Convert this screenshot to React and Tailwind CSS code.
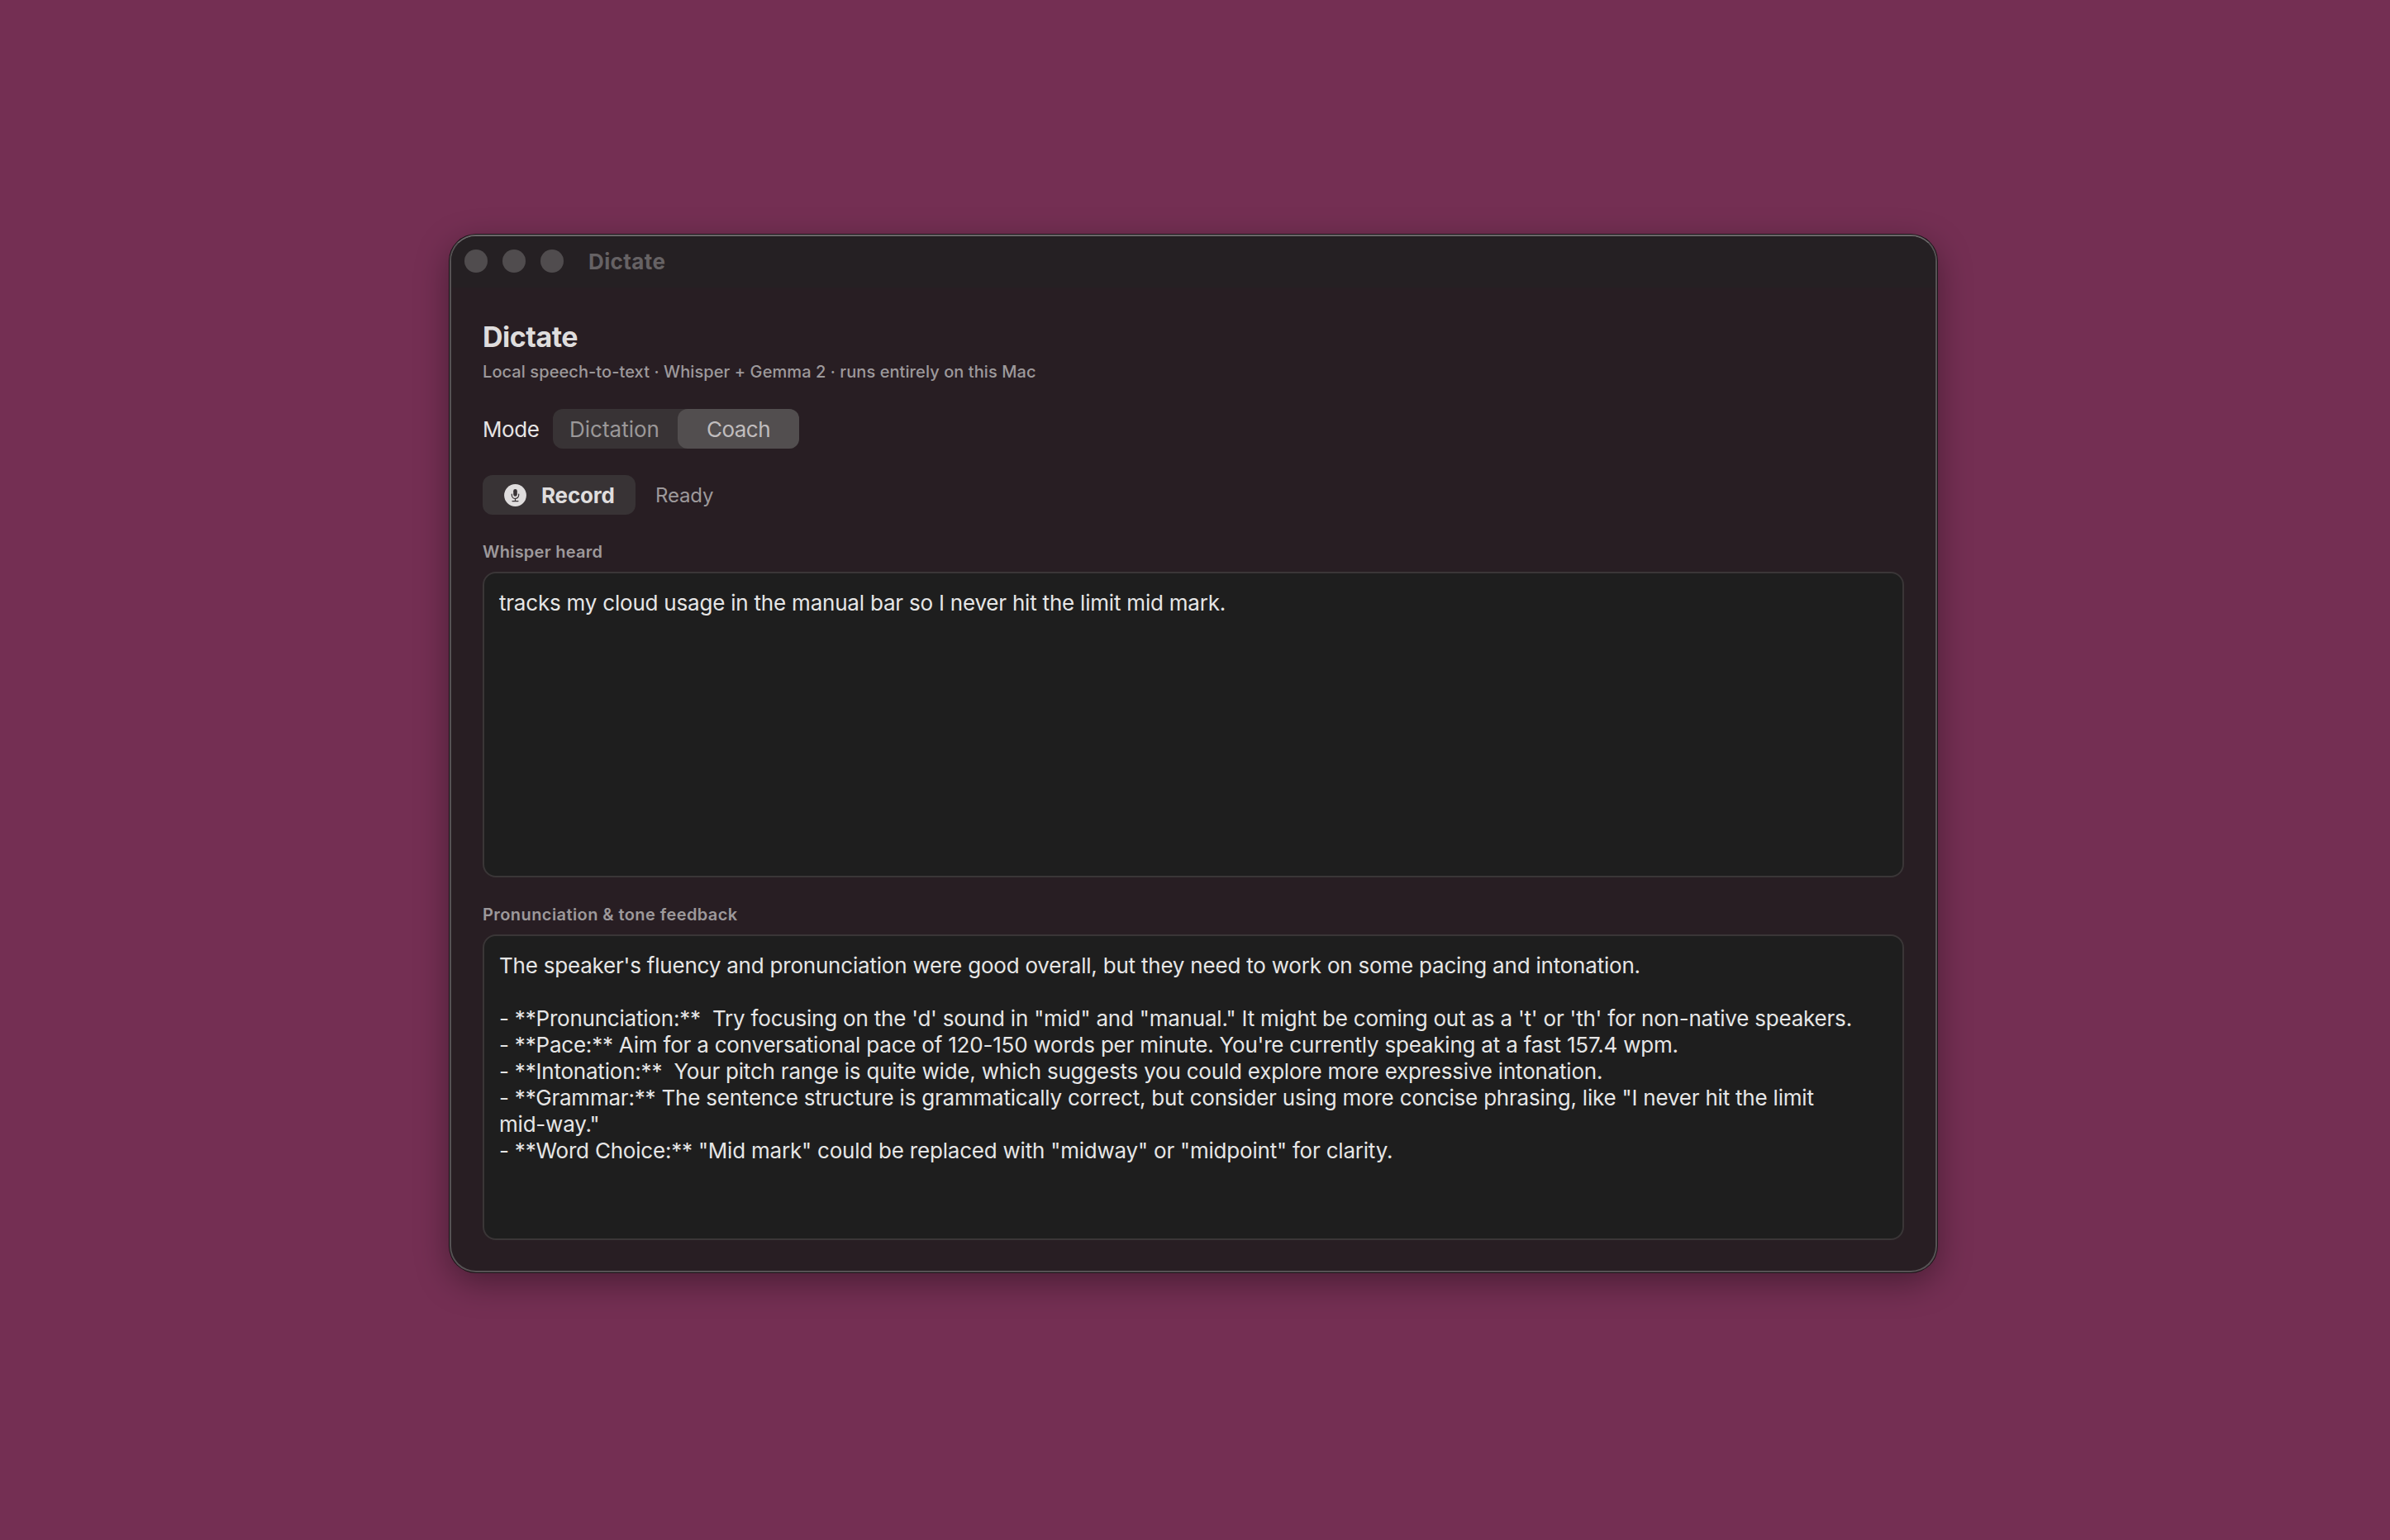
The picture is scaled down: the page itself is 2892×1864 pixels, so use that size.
import React, { useState } from 'react';
import clsx from 'clsx';

const MODES = [
  { id: 'dictation', label: 'Dictation' },
  { id: 'coach', label: 'Coach' },
];

const transcript = 'tracks my cloud usage in the manual bar so I never hit the limit mid mark.';

const feedback = `The speaker's fluency and pronunciation were good overall, but they need to work on some pacing and intonation.

- **Pronunciation:**  Try focusing on the 'd' sound in "mid" and "manual." It might be coming out as a 't' or 'th' for non-native speakers.
- **Pace:** Aim for a conversational pace of 120-150 words per minute. You're currently speaking at a fast 157.4 wpm.
- **Intonation:**  Your pitch range is quite wide, which suggests you could explore more expressive intonation.
- **Grammar:** The sentence structure is grammatically correct, but consider using more concise phrasing, like "I never hit the limit mid-way."
- **Word Choice:** "Mid mark" could be replaced with "midway" or "midpoint" for clarity.`;

function TitleBar({ title }) {
  return (
    <div className="flex h-[62px] shrink-0 items-center rounded-t-[30px] bg-[#252023] pb-[2px] pl-4">
      <div className="flex gap-[18px]">
        <span className="size-7 rounded-full bg-[#504c4e]" />
        <span className="size-7 rounded-full bg-[#504c4e]" />
        <span className="size-7 rounded-full bg-[#504c4e]" />
      </div>
      <span className="ml-[30px] pt-[2px] text-[26px] leading-8 font-bold tracking-[0.4px] text-[#666264]">{title}</span>
    </div>
  );
}

function MicIcon() {
  return (
    <svg className="size-[27px]" viewBox="0 0 27 27" fill="none">
      <circle cx="13.5" cy="13.5" r="13.4" fill="#dfdddd" />
      <rect x="11.2" y="6" width="4.6" height="8.8" rx="2.3" fill="#383335" />
      <path
        d="M9.3 12v1.3a4.2 4.2 0 0 0 8.4 0V12M13.5 17.4v3.1M10 20.6h7"
        stroke="#383335"
        strokeWidth="1.2"
        strokeLinecap="round"
      />
    </svg>
  );
}

function ModePicker({ value, onChange }) {
  return (
    <div className="flex h-12 w-[298px] rounded-xl bg-[#383335]">
      {MODES.map((mode) => (
        <button
          key={mode.id}
          type="button"
          onClick={() => onChange(mode.id)}
          className={clsx(
            'rounded-xl pt-[2px] text-[26px] leading-8',
            mode.id === 'dictation' ? 'w-[151px] pl-5 text-left' : 'w-[147px] tracking-[-0.5px]',
            value === mode.id ? 'bg-[#524e4f] text-[#c0bdbe]' : 'text-[#9b9899]'
          )}
        >
          {mode.label}
        </button>
      ))}
    </div>
  );
}

function TextPanel({ children }) {
  return (
    <div className="h-[370px] rounded-[16px] border-2 border-[#3a3637] bg-[#1e1e1e] pt-5 pr-[46px] pl-[18px] text-[26px] leading-8 tracking-[-0.21px] whitespace-pre-wrap text-[#e6e6e6]">
      {children}
    </div>
  );
}

function App() {
  const [mode, setMode] = useState('coach');

  return (
    <div className="flex h-[1864px] w-[2892px] overflow-hidden bg-[#742f53] pt-[284px] pl-[544px] font-['Inter',sans-serif]">
      <div className="flex h-[1256px] w-[1800px] flex-col rounded-[32px] border-2 border-[#565254] border-t-[#6a6668] bg-[#281e23] shadow-[0_0_0_1px_#1c1619,0_12px_40px_rgba(0,0,0,0.37)]">
        <TitleBar title="Dictate" />

        <div className="flex flex-col px-[38px] pt-10">
          <h1 className="text-[34px] leading-10 font-bold tracking-[-0.49px] text-[#dfdddd]">Dictate</h1>
          <p className="mt-[9px] text-[20px] leading-[26px] font-medium tracking-[0.08px] text-[#9d999b]">
            Local speech-to-text · Whisper + Gemma 2 · runs entirely on this Mac
          </p>

          <div className="mt-8 flex items-center">
            <span className="w-[85px] pt-[2px] text-[26px] leading-8 tracking-[-0.4px] text-[#e6e4e4]">Mode</span>
            <ModePicker value={mode} onChange={setMode} />
          </div>

          <div className="mt-8 flex items-center gap-6">
            <button type="button" className="flex h-12 w-[185px] items-center gap-[18px] rounded-xl bg-[#383335] pl-[26px]">
              <MicIcon />
              <span className="pt-[2px] text-[26px] leading-8 font-bold tracking-[-0.17px] text-[#dfdddd]">Record</span>
            </button>
            <span className="pt-px text-[24px] leading-8 tracking-[-0.15px] text-[#9d999b]">Ready</span>
          </div>

          <h2 className="mt-8 mb-[11px] text-[20px] leading-[26px] font-semibold tracking-[0.25px] text-[#9d999b]">
            Whisper heard
          </h2>
          <TextPanel>{transcript}</TextPanel>

          <h2 className="mt-8 mb-[11px] text-[20px] leading-[26px] font-semibold tracking-[0.42px] text-[#9d999b]">
            Pronunciation &amp; tone feedback
          </h2>
          <TextPanel>{feedback}</TextPanel>
        </div>
      </div>
    </div>
  );
}

export default App;
